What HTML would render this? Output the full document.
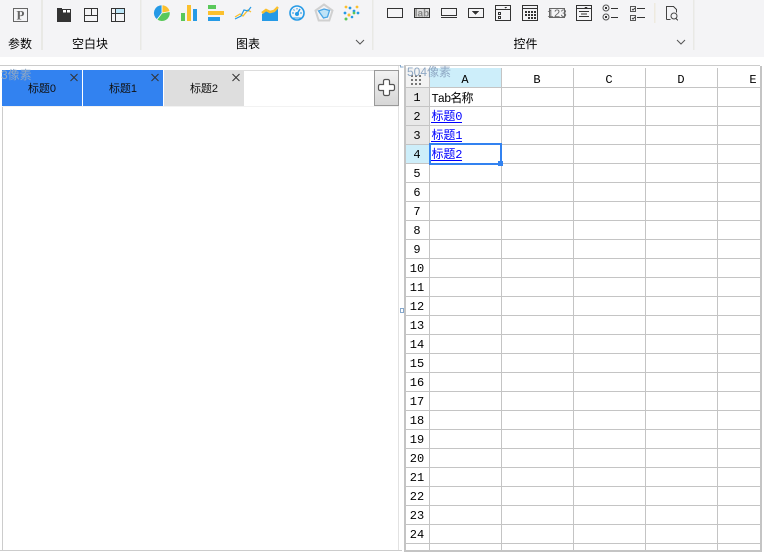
<!DOCTYPE html>
<html><head><meta charset="utf-8"><style>
html,body{margin:0;padding:0;background:#fff;width:764px;height:554px;overflow:hidden}
svg{position:absolute;left:0;top:0}
text{font-family:"Liberation Sans","WenQuanYi Zen Hei",sans-serif}
.l{font-size:12px;fill:#000;text-anchor:middle}
.m{font-family:"WenQuanYi Zen Hei","Liberation Mono",monospace;font-size:12px;fill:#000;text-anchor:middle}
.c{font-family:"WenQuanYi Zen Hei","Liberation Mono",monospace;font-size:12px;fill:#0000ff}
.t{font-size:11px;fill:#111;text-anchor:middle}
.p{font-size:12px;fill:#8fa8c4}
</style></head><body>
<svg width="764" height="554" viewBox="0 0 764 554" shape-rendering="crispEdges">
<rect width="764" height="57" fill="#f4f4f6"/>
<g fill="#e9e9e5"><rect x="41" width="2" height="50"/><rect x="140" width="1.5" height="50"/><rect x="372" width="1.5" height="50"/><rect x="693" width="1.5" height="50"/><rect x="654" y="3" width="1.5" height="20" fill="#eeeadf"/></g>
<!-- lines -->
<rect y="65" x="0" width="400" height="1" fill="#ccc"/><rect y="65" x="404" width="356" height="1" fill="#ccc"/>
<rect y="70" x="244" width="154" height="1" fill="#ddd"/>
<rect x="2" y="106" width="1" height="444" fill="#ccc"/>
<rect x="398" y="66" width="1" height="484" fill="#e2e2e2"/>
<rect x="0" y="550" width="402" height="1" fill="#ccc"/>
<rect x="2" y="106" width="396" height="1" fill="#f2f2f2"/>
<!-- tabs -->
<rect x="2" y="70" width="80" height="36" fill="#3282f0"/><rect x="83" y="70" width="80" height="36" fill="#3282f0"/><rect x="164" y="70" width="80" height="36" fill="#dedede"/>
<!-- add button -->
<defs><linearGradient id="g" x1="0" y1="0" x2="0" y2="1"><stop offset="0" stop-color="#f2f2f2"/><stop offset="1" stop-color="#d6d6d6"/></linearGradient></defs>
<rect x="374.500" y="70.500" width="24" height="35" fill="url(#g)" stroke="#999"/>
<!-- grid -->
<rect x="405" y="68" width="24" height="19" fill="#f3f3f3"/>
<rect x="430" y="68" width="71" height="19" fill="#cdeefa"/>
<rect x="405" y="88" width="24" height="56" fill="#e8e8e8"/>
<rect x="405" y="145" width="24" height="18" fill="#cdeefa"/>
<g fill="#c4c4c4">
<rect x="404" y="66" width="2" height="485"/><rect x="760" y="66" width="2" height="485"/><rect x="404" y="550" width="358" height="2"/>
<rect x="429" y="68" width="1" height="482"/><rect x="501" y="68" width="1" height="482"/><rect x="573" y="68" width="1" height="482"/><rect x="645" y="68" width="1" height="482"/><rect x="717" y="68" width="1" height="482"/>
<rect x="405" y="87" width="355" height="1"/><rect x="405" y="106" width="355" height="1"/><rect x="405" y="125" width="355" height="1"/><rect x="405" y="144" width="355" height="1"/><rect x="405" y="163" width="355" height="1"/><rect x="405" y="182" width="355" height="1"/><rect x="405" y="201" width="355" height="1"/><rect x="405" y="220" width="355" height="1"/><rect x="405" y="239" width="355" height="1"/><rect x="405" y="258" width="355" height="1"/><rect x="405" y="277" width="355" height="1"/><rect x="405" y="296" width="355" height="1"/><rect x="405" y="315" width="355" height="1"/><rect x="405" y="334" width="355" height="1"/><rect x="405" y="353" width="355" height="1"/><rect x="405" y="372" width="355" height="1"/><rect x="405" y="391" width="355" height="1"/><rect x="405" y="410" width="355" height="1"/><rect x="405" y="429" width="355" height="1"/><rect x="405" y="448" width="355" height="1"/><rect x="405" y="467" width="355" height="1"/><rect x="405" y="486" width="355" height="1"/><rect x="405" y="505" width="355" height="1"/><rect x="405" y="524" width="355" height="1"/><rect x="405" y="543" width="355" height="1"/>
</g>
<!-- corner dots -->
<g fill="#777"><rect x="411" y="75" width="2" height="2"/><rect x="415" y="75" width="2" height="2"/><rect x="419" y="75" width="2" height="2"/><rect x="411" y="79" width="2" height="2"/><rect x="415" y="79" width="2" height="2"/><rect x="419" y="79" width="2" height="2"/><rect x="411" y="83" width="2" height="2"/><rect x="415" y="83" width="2" height="2"/><rect x="419" y="83" width="2" height="2"/></g>
<!-- selection -->
<rect x="430" y="144" width="71" height="20" fill="none" stroke="#3282f0" stroke-width="2"/>
<rect x="498" y="161" width="5" height="5" fill="#3282f0"/>
<!-- small handles -->
<g fill="none" stroke="#86a8cc"><rect x="400.500" y="308.500" width="3" height="4" fill="#fff"/><path d="M400.500 65v2h3"/></g>
<!-- P icon -->
<rect x="13.500" y="8.500" width="14" height="13" fill="none" stroke="#666"/>
<!-- block icons -->
<path d="M57 8h5v1h9v13H57z" fill="#333"/><rect x="63" y="10" width="3" height="2.500" fill="#fff"/><rect x="67" y="10" width="3" height="2.500" fill="#fff"/>
<g fill="none" stroke="#333"><rect x="84.500" y="8.500" width="13" height="13"/><path d="M84 15.500h14M91.500 8v7"/></g>
<rect x="116" y="9" width="9" height="4.500" fill="#bde6f8"/>
<g fill="none" stroke="#333"><rect x="111.500" y="8.500" width="13" height="13"/><path d="M111 13.500h14M115.500 8v14"/></g>
<g shape-rendering="geometricPrecision">
<!-- pie -->
<path d="M162 13V5.200A7.800 7.800 0 0 1 169.600 11.500z" fill="#fbc02d"/>
<path d="M162 13L169.600 11.500A7.800 7.800 0 0 1 157 19.200z" fill="#5ac85a"/>
<path d="M162 13L157 19.200A7.800 7.800 0 0 1 162 5.200z" fill="#259ae6"/>
<path d="M162 5V13L170 11.500M162 13L157 19.500" stroke="#fff" stroke-width=".8" fill="none"/>
<!-- bars -->
<rect x="181" y="13" width="4" height="8" fill="#5ac85a"/><rect x="187" y="5" width="4" height="16" fill="#fbc02d"/><rect x="193" y="9" width="4" height="12" fill="#259ae6"/>
<!-- hbars -->
<rect x="208" y="5" width="8" height="4" fill="#5ac85a"/><rect x="208" y="11" width="16" height="4" fill="#fbc02d"/><rect x="208" y="17" width="12" height="4" fill="#259ae6"/>
<!-- line -->
<path d="M235 17l5-3 3 2 5-6 3 2" fill="none" stroke="#fbc02d" stroke-width="1.300"/>
<path d="M235 19l6-3 3-6 4 1 3-4" fill="none" stroke="#259ae6" stroke-width="1.200"/>
<!-- area -->
<path d="M262 14l4-3 4 2 4-1 4-4v13h-16z" fill="#259ae6"/><path d="M262 13l4-3 4 2 4-1 4-4" fill="none" stroke="#fbc02d" stroke-width="2.500"/>
<!-- gauge -->
<circle cx="297" cy="13" r="7" fill="none" stroke="#259ae6" stroke-width="1.600"/>
<path d="M297 14l3-5" stroke="#259ae6" stroke-width="1.500"/><circle cx="297" cy="14" r="2" fill="#259ae6"/>
<path d="M292 13h2M300 13h2M297 8v1.500M293.500 9.500l1 1M293 18h8" stroke="#259ae6" stroke-width="1"/>
<!-- radar -->
<path d="M324 4.500l8.500 6-3.200 10h-10.600l-3.200-10z" fill="none" stroke="#d0d0d0" stroke-width="2"/>
<path d="M324 9l5.500 1.500-2 6.500-4 1-5-7z" fill="#bfe3f7" stroke="#4aa6e6" stroke-width="1.300"/>
<!-- scatter -->
<g fill="#fbc02d"><circle cx="346" cy="7" r="1.400"/><circle cx="357" cy="7" r="1.400"/><circle cx="349" cy="15" r="1.500"/></g>
<g fill="#259ae6"><circle cx="350" cy="8" r="1.400"/><circle cx="345" cy="13" r="1.400"/><circle cx="354" cy="11" r="1.400"/><circle cx="358" cy="13" r="1.400"/><circle cx="352" cy="17" r="1.300"/></g>
<g fill="#5ac85a"><circle cx="346" cy="19" r="1.500"/><circle cx="354" cy="13" r="1.400"/></g>
<!-- chevrons -->
<path d="M356 40l4 4 4-4M677 40l4 4 4-4" fill="none" stroke="#555"/>
<!-- plus -->
<path d="M383.500 81.500a1.500 1.500 0 0 1 1.500-1.500h3a1.500 1.500 0 0 1 1.500 1.500v3.500h3.500a1.500 1.500 0 0 1 1.500 1.500v3a1.500 1.500 0 0 1-1.500 1.500h-3.500v3.500a1.500 1.500 0 0 1-1.500 1.500h-3a1.500 1.500 0 0 1-1.500-1.500v-3.500h-3.500a1.500 1.500 0 0 1-1.500-1.500v-3a1.500 1.500 0 0 1 1.500-1.500h3.500z" transform="translate(0 -.5)" fill="#fff" stroke="#555" stroke-width="1.200"/>
<!-- tab close -->
<path d="M70.500 74l7 7M77.500 74l-7 7M151.500 74l7 7M158.500 74l-7 7M232.500 74l7 7M239.500 74l-7 7" stroke="#333" stroke-width="1"/>
</g>
<!-- control icons -->
<g fill="none" stroke="#333">
<rect x="387.500" y="8.500" width="15" height="9"/>
<rect x="414.500" y="8.500" width="15" height="9" fill="#dcdcdc"/>
<rect x="441.500" y="8.500" width="15" height="7"/><path d="M441 17.500h16"/>
<rect x="468.500" y="8.500" width="15" height="9"/>
<rect x="495.500" y="5.500" width="15" height="15"/><path d="M495 9.500h16"/><rect x="498.500" y="12.500" width="2" height="2"/><rect x="498.500" y="16.500" width="2" height="2"/>
<rect x="522.500" y="5.500" width="15" height="15"/><path d="M522 8.500h16"/>
<rect x="549.500" y="8.500" width="15" height="9" stroke="#666"/>
<rect x="576.500" y="5.500" width="15" height="15"/><path d="M576 8.500h16M579 11.500h10M581 14h6M579 16.500h10"/>
<circle cx="606" cy="8" r="3" stroke="#555" shape-rendering="geometricPrecision"/><circle cx="606" cy="17" r="3" stroke="#555" shape-rendering="geometricPrecision"/><path d="M611 8.500h7M611 17.500h7"/>
<rect x="630.500" y="6.500" width="5" height="5" stroke="#555"/><rect x="630.500" y="15.500" width="5" height="5" stroke="#555"/><path d="M637 8.500h8M637 17.500h8"/>
<path d="M632 9l1 1 2-2M632 18l1 1 2-2" stroke="#444" shape-rendering="geometricPrecision"/>
<path d="M666.500 19.500v-13h7l3 3v3M666.500 19.500h4" stroke="#444"/>
<circle cx="674" cy="16" r="3" stroke="#444" shape-rendering="geometricPrecision"/><path d="M676 18.500l2 2" stroke="#444"/>
</g>
<path d="M472 11h7l-3.500 4z" fill="#333"/><path d="M504 7h3l-1.500 1.500z" fill="#333"/><path d="M584 7h4l-2 1.500z" fill="#333"/>
<g fill="#333"><rect x="525" y="11" width="2" height="2"/><rect x="528" y="11" width="2" height="2"/><rect x="531" y="11" width="2" height="2"/><rect x="534" y="11" width="2" height="2"/><rect x="525" y="14" width="2" height="2"/><rect x="528" y="14" width="2" height="2"/><rect x="531" y="14" width="2" height="2"/><rect x="534" y="14" width="2" height="2"/><rect x="528" y="17" width="2" height="2"/><rect x="531" y="17" width="2" height="2"/><rect x="534" y="17" width="2" height="2"/><rect x="605" y="7" width="2" height="2"/><rect x="605" y="16" width="2" height="2"/></g>
<!-- text -->
<text x="20.500" y="19.500" text-anchor="middle" style="font-family:'Liberation Serif',serif;font-size:13px;font-weight:bold" fill="#666">P</text>
<text x="422" y="16.500" text-anchor="middle" style="font-size:10px;font-weight:bold" fill="#888">lab</text>
<text x="557" y="17" text-anchor="middle" style="font-size:11px;font-family:'Liberation Mono',monospace" fill="#666">123</text>
<text class="l" x="20" y="48">参数</text><text class="l" x="90" y="48">空白块</text><text class="l" x="248" y="48">图表</text><text class="l" x="525.500" y="48">控件</text>
<text class="t" x="42" y="92">标题0</text><text class="t" x="123" y="92">标题1</text><text class="t" x="204" y="92">标题2</text>
<text class="m" x="465" y="83">A</text><text class="m" x="537" y="83">B</text><text class="m" x="609" y="83">C</text><text class="m" x="681" y="83">D</text><text class="m" x="753" y="83">E</text>
<text class="m" x="417" y="101">1</text><text class="m" x="417" y="120">2</text><text class="m" x="417" y="139">3</text><text class="m" x="417" y="158">4</text><text class="m" x="417" y="177">5</text><text class="m" x="417" y="196">6</text><text class="m" x="417" y="215">7</text><text class="m" x="417" y="234">8</text><text class="m" x="417" y="253">9</text><text class="m" x="417" y="272">10</text><text class="m" x="417" y="291">11</text><text class="m" x="417" y="310">12</text><text class="m" x="417" y="329">13</text><text class="m" x="417" y="348">14</text><text class="m" x="417" y="367">15</text><text class="m" x="417" y="386">16</text><text class="m" x="417" y="405">17</text><text class="m" x="417" y="424">18</text><text class="m" x="417" y="443">19</text><text class="m" x="417" y="462">20</text><text class="m" x="417" y="481">21</text><text class="m" x="417" y="500">22</text><text class="m" x="417" y="519">23</text><text class="m" x="417" y="538">24</text>
<text x="431.500" y="102" style="font-family:'WenQuanYi Zen Hei','Liberation Mono',monospace;font-size:12px" fill="#000" textLength="42">Tab名称</text>
<text class="c" x="431.500" y="120" textLength="31">标题0</text>
<text class="c" x="431.500" y="139" textLength="31">标题1</text>
<text class="c" x="431.500" y="158" textLength="31">标题2</text>
<rect x="431" y="122" width="31" height="1" fill="#00f"/><rect x="431" y="141" width="31" height="1" fill="#00f"/><rect x="431" y="160" width="31" height="1" fill="#00f"/>
<text class="p" x="1" y="79">3像素</text>
<text class="p" x="407" y="76">504像素</text>
</svg>
</body></html>
